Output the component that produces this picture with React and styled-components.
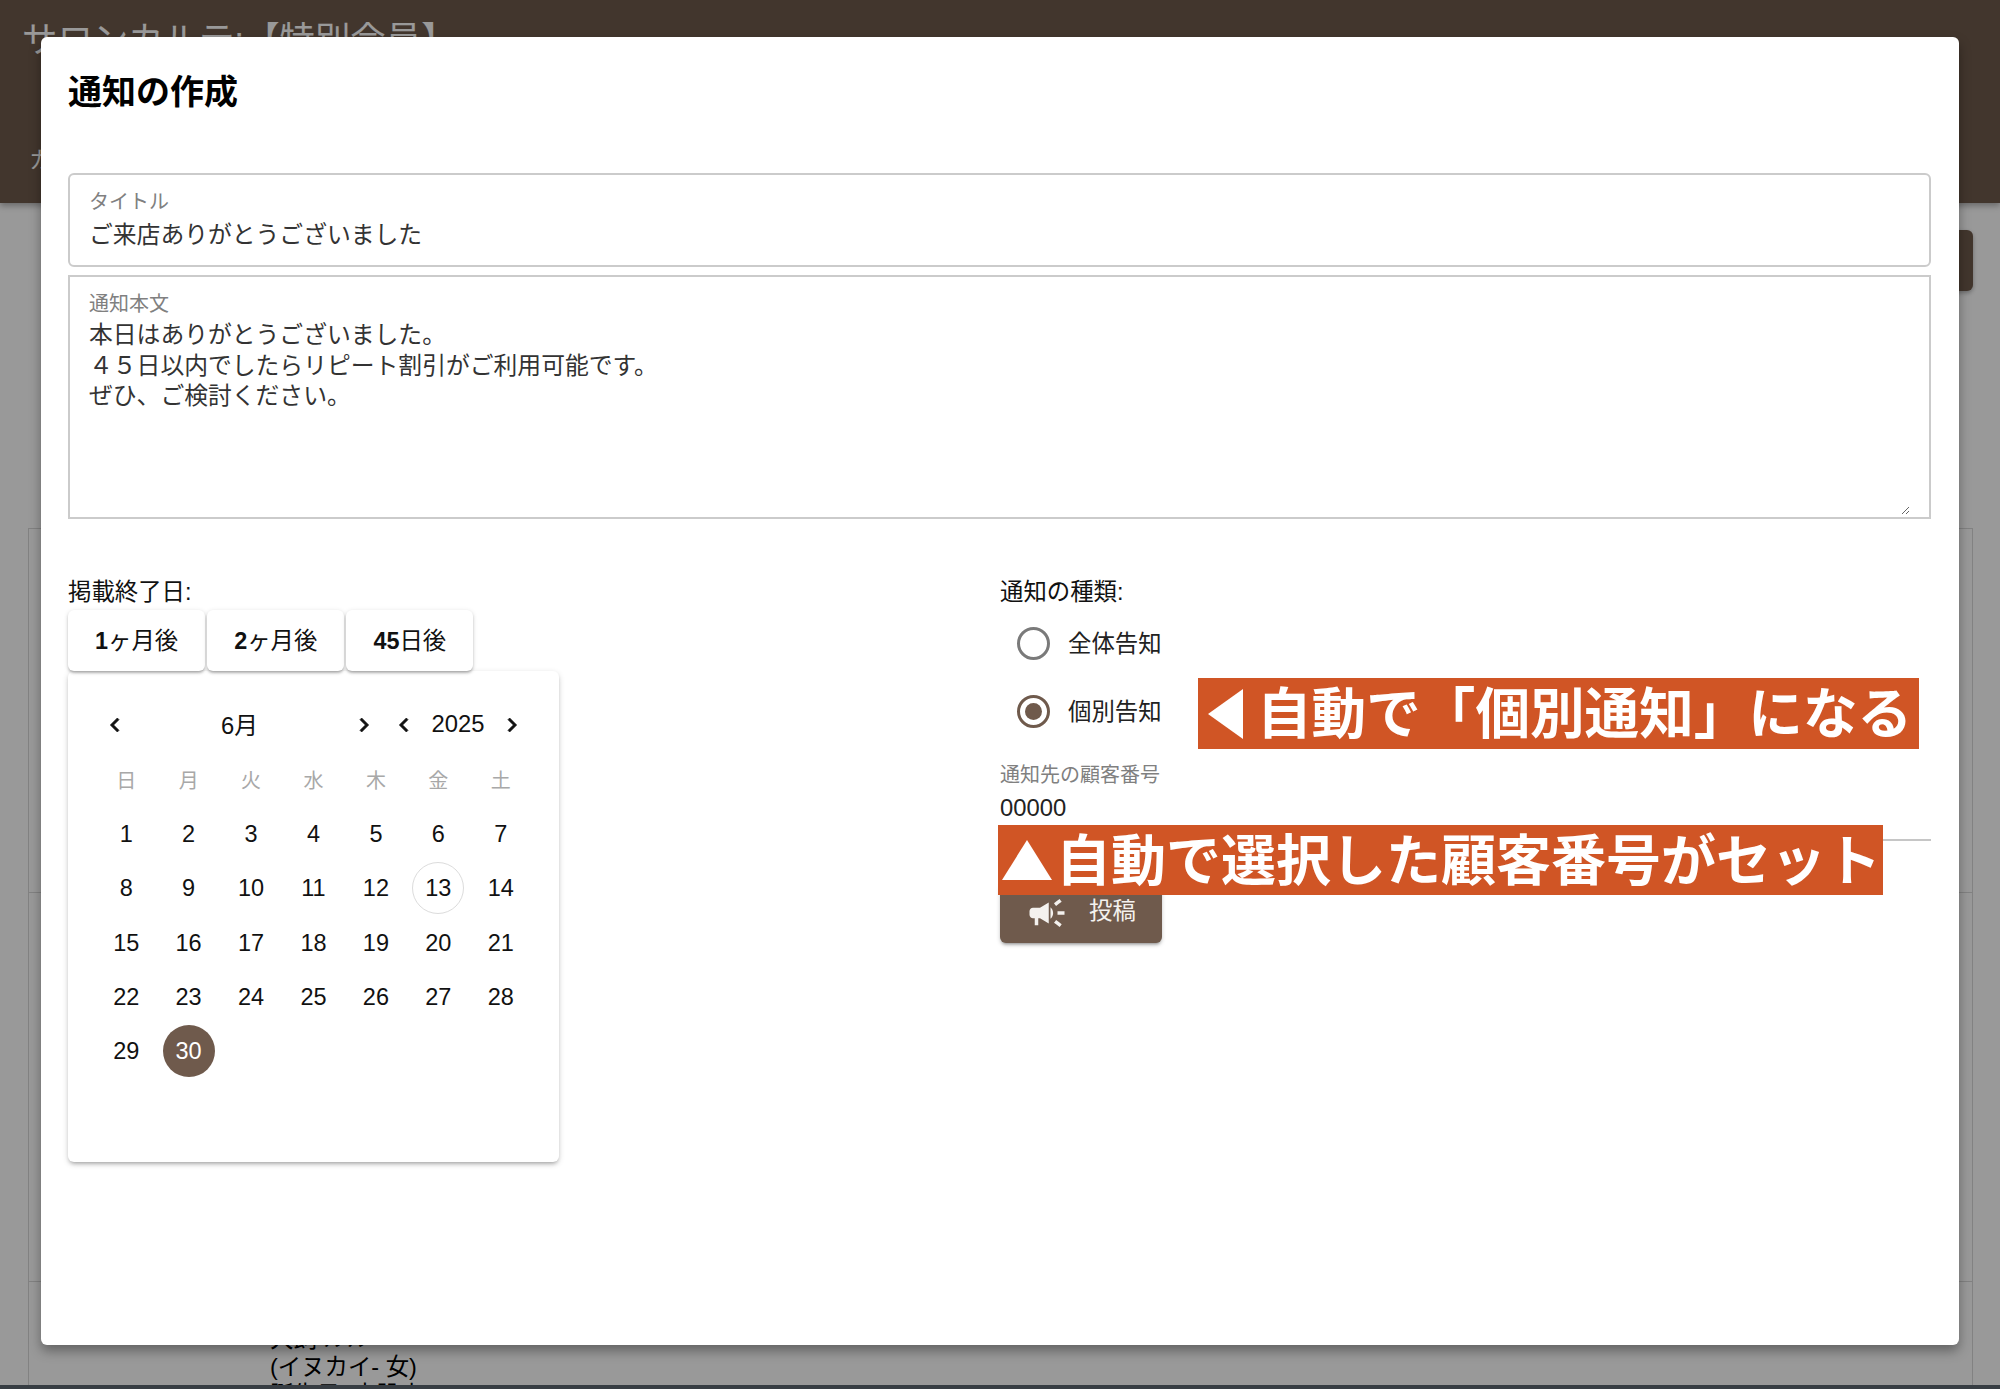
import React from 'react';
import styled, { createGlobalStyle } from 'styled-components';
import { MdCampaign, MdChevronLeft, MdChevronRight } from 'react-icons/md';

const PRIMARY = '#6f5a4c';
const FONT = '"Liberation Sans", "Noto Sans CJK JP", sans-serif';

const GlobalStyle = createGlobalStyle`
  html, body {
    margin: 0;
    padding: 0;
    background: #fff;
    font-family: ${FONT};
    color: #000;
  }
`;

const Page = styled.div`
  position: relative;
  width: 2000px;
  height: 1389px;
  overflow: hidden;
  display: flex;
  flex-direction: column;
`;

const AppBar = styled.header`
  flex: none;
  height: 203px;
  box-sizing: border-box;
  background: ${PRIMARY};
  color: #fff;
  padding: 20px 22px 0;
  box-shadow: 0 3px 6px rgba(0, 0, 0, 0.3);
`;

const AppTitle = styled.div`
  font-size: 35.4px;
  line-height: 40px;
`;

const AppTab = styled.div`
  margin-top: 84px;
  padding-left: 7px;
  font-size: 23px;
  line-height: 32px;
`;

const Content = styled.main`
  flex: 1;
  min-height: 0;
  overflow: hidden;
  padding: 27px 27px 0 28px;
`;

const ToolRow = styled.div`
  display: flex;
  justify-content: flex-end;
`;

const ToolButton = styled.div`
  width: 220px;
  height: 61px;
  border-radius: 6px;
  background: ${PRIMARY};
  box-shadow: 0 2px 4px rgba(0, 0, 0, 0.3);
`;

const Card = styled.section`
  margin-top: 237px;
  border: 1px solid #d9d9d9;
  border-bottom: 0;
`;

const Row = styled.div`
  height: ${(p) => p.$height}px;
  box-sizing: border-box;
  padding: 43px 0 0 241px;
  border-bottom: 1px solid #d9d9d9;
  font-size: 23.4px;
  line-height: 28px;
  color: #000;
`;

const BottomBar = styled.div`
  flex: none;
  height: 4px;
  background: #5c6670;
`;

const Backdrop = styled.div`
  position: absolute;
  inset: 0;
  background: rgba(0, 0, 0, 0.4);
`;

const Modal = styled.div`
  position: absolute;
  left: 41px;
  top: 37px;
  width: 1918px;
  height: 1308px;
  box-sizing: border-box;
  padding: 0 28px 0 27px;
  background: #fff;
  border-radius: 6px;
  box-shadow: 0 6px 12px rgba(0, 0, 0, 0.35);
`;

const ModalTitle = styled.h2`
  margin: 0;
  height: 136px;
  box-sizing: border-box;
  padding-top: 35px;
  font-size: 34px;
  line-height: 40px;
  font-weight: 700;
`;

const Field = styled.div`
  box-sizing: border-box;
  height: ${(p) => p.$height}px;
  margin-bottom: 8px;
  padding: 15px 19px 0;
  border: 2px solid #cbcbcb;
  border-radius: ${(p) => p.$radius || 0}px;
`;

const FieldLabel = styled.div`
  font-size: 20px;
  line-height: 24px;
  color: #808080;
`;

const FieldValue = styled.div`
  margin-top: 5px;
  font-size: 23.8px;
  line-height: 32px;
  color: #333;
`;

const BodyInput = styled.textarea`
  display: block;
  box-sizing: border-box;
  width: 100%;
  height: 195px;
  margin: 4px 0 0;
  padding: 0;
  border: 0;
  outline: 0;
  resize: vertical;
  font-family: ${FONT};
  font-size: 23.8px;
  line-height: 30.7px;
  color: #333;
`;

const Columns = styled.div`
  display: grid;
  grid-template-columns: 932px 931px;
  margin-top: 57px;
`;

const Column = styled.div`
  position: relative;
`;

const SectionLabel = styled.div`
  height: 33px;
  font-size: 23.4px;
  line-height: 32px;
  color: #111;
`;

const QuickRow = styled.div`
  display: flex;
  gap: 2px;
  margin-top: 1px;
`;

const QuickButton = styled.button`
  height: 61px;
  padding: 0 27px 4px;
  border: 0;
  border-radius: 6px;
  background: #fff;
  box-shadow: 0 3px 3px -2px rgba(0, 0, 0, 0.2), 0 2px 3px rgba(0, 0, 0, 0.16), 0 1px 5px rgba(0, 0, 0, 0.12);
  font-family: ${FONT};
  font-size: 23.4px;
  color: #111;

  b {
    font-weight: 700;
  }
`;

const Calendar = styled.div`
  width: 491px;
  height: 491px;
  box-sizing: border-box;
  padding: 26px 27px 27px;
  background: #fff;
  border-radius: 6px;
  box-shadow: 0 3px 4px -2px rgba(0, 0, 0, 0.3), 0 2px 6px rgba(0, 0, 0, 0.16);
`;

const CalNav = styled.div`
  display: flex;
  height: 55px;
`;

const NavGroup = styled.div`
  width: ${(p) => p.$width}px;
  flex: none;
  display: flex;
  align-items: center;
  justify-content: space-between;
  font-size: 23.8px;
  color: #111;

  svg {
    width: 40px;
    flex: none;
  }

  svg path:not([fill='none']) {
    stroke: currentColor;
    stroke-width: 0.6;
  }

  span {
    padding-bottom: 2px;
  }
`;

const CalGrid = styled.div`
  display: grid;
  grid-template-columns: repeat(7, 1fr);
  grid-auto-rows: 54.2px;
  justify-items: center;
  align-items: center;
`;

const WeekDay = styled.div`
  font-size: 20px;
  color: #a8a8a8;
`;

const Day = styled.div`
  width: 52px;
  height: 52px;
  box-sizing: border-box;
  display: flex;
  align-items: center;
  justify-content: center;
  padding-top: 2px;
  border-radius: 50%;
  font-size: 23.5px;
  margin-top: 1px;
  border: 1px solid ${(p) => (p.$today ? '#dcdcdc' : 'transparent')};
  background: ${(p) => (p.$selected ? PRIMARY : 'transparent')};
  color: ${(p) => (p.$selected ? '#fff' : '#111')};
`;

const RadioRow = styled.label`
  display: flex;
  align-items: center;
  height: 68px;
  padding-left: 17px;
  font-size: 23.4px;
  color: #222;
`;

const RadioMark = styled.span`
  position: relative;
  width: 33px;
  height: 33px;
  box-sizing: border-box;
  margin-right: 18px;
  border-radius: 50%;
  border: 3px solid ${(p) => (p.$checked ? PRIMARY : '#7a7a7a')};

  &::after {
    content: '';
    display: ${(p) => (p.$checked ? 'block' : 'none')};
    position: absolute;
    inset: 5px;
    border-radius: 50%;
    background: ${PRIMARY};
  }
`;

const RadioText = styled.span`
  padding-bottom: 3px;
`;

const NumberField = styled.div`
  margin-top: 18px;
  height: 76px;
  border-bottom: 2px solid #c6c6c6;
`;

const NumberValue = styled.div`
  margin-top: 6px;
  font-size: 23.8px;
  line-height: 30px;
  color: #222;
`;

const PostButton = styled.button`
  display: flex;
  align-items: center;
  width: 162px;
  height: 61px;
  margin-top: 41px;
  padding: 0 0 0 26px;
  border: 0;
  border-radius: 6px;
  background: ${PRIMARY};
  color: #f4f1ee;
  font-family: ${FONT};
  font-size: 23.4px;
  box-shadow: 0 3px 3px -2px rgba(0, 0, 0, 0.3), 0 2px 4px rgba(0, 0, 0, 0.2);

  svg {
    margin-right: 21px;
  }

  span {
    padding-bottom: 7px;
  }
`;

const Callout = styled.div`
  position: absolute;
  left: ${(p) => p.$left}px;
  top: ${(p) => p.$top}px;
  width: ${(p) => p.$width}px;
  height: ${(p) => p.$height}px;
  box-sizing: border-box;
  display: flex;
  align-items: center;
  padding-left: ${(p) => p.$pad}px;
  background: #d05525;
  color: #fff;
  font-weight: 700;
  white-space: nowrap;
  overflow: hidden;
`;

const CalloutText = styled.span`
  margin-left: ${(p) => p.$gap}px;
  padding-top: 3px;
  font-size: ${(p) => p.$size}px;
  line-height: 1;
`;

const WEEK = ['日', '月', '火', '水', '木', '金', '土'];
const DAYS = Array.from({ length: 30 }, (_, i) => i + 1);

const App = () => {
  return (
    <Page>
      <GlobalStyle />
      <AppBar>
        <AppTitle>サロンカルテ:【特別会員】</AppTitle>
        <AppTab>カルテ</AppTab>
      </AppBar>
      <Content>
        <ToolRow>
          <ToolButton />
        </ToolRow>
        <Card>
          <Row $height={364} />
          <Row $height={389} />
          <Row $height={300}>
            犬飼 ルル
            <br />
            (イヌカイ- 女)
            <br />
            誕生日: 未設定
          </Row>
        </Card>
      </Content>
      <BottomBar />
      <Backdrop />
      <Modal>
        <ModalTitle>通知の作成</ModalTitle>
        <Field $height={94} $radius={6}>
          <FieldLabel>タイトル</FieldLabel>
          <FieldValue>ご来店ありがとうございました</FieldValue>
        </Field>
        <Field $height={244}>
          <FieldLabel>通知本文</FieldLabel>
          <BodyInput
            readOnly
            defaultValue={'本日はありがとうございました。\n４５日以内でしたらリピート割引がご利用可能です。\nぜひ、ご検討ください。'}
          />
        </Field>
        <Columns>
          <Column>
            <SectionLabel>掲載終了日:</SectionLabel>
            <QuickRow>
              <QuickButton><b>1</b>ヶ月後</QuickButton>
              <QuickButton><b>2</b>ヶ月後</QuickButton>
              <QuickButton><b>45</b>日後</QuickButton>
            </QuickRow>
            <Calendar>
              <CalNav>
                <NavGroup $width={289}>
                  <MdChevronLeft size={28} />
                  <span>6月</span>
                  <MdChevronRight size={28} />
                </NavGroup>
                <NavGroup $width={148}>
                  <MdChevronLeft size={28} />
                  <span>2025</span>
                  <MdChevronRight size={28} />
                </NavGroup>
              </CalNav>
              <CalGrid>
                {WEEK.map((w) => (
                  <WeekDay key={w}>{w}</WeekDay>
                ))}
                {DAYS.map((d) => (
                  <Day key={d} $today={d === 13} $selected={d === 30}>
                    {d}
                  </Day>
                ))}
              </CalGrid>
            </Calendar>
          </Column>
          <Column>
            <SectionLabel>通知の種類:</SectionLabel>
            <RadioRow>
              <RadioMark />
              <RadioText>全体告知</RadioText>
            </RadioRow>
            <RadioRow>
              <RadioMark $checked />
              <RadioText>個別告知</RadioText>
            </RadioRow>
            <NumberField>
              <FieldLabel>通知先の顧客番号</FieldLabel>
              <NumberValue>00000</NumberValue>
            </NumberField>
            <PostButton>
              <MdCampaign size={42} />
              <span>投稿</span>
            </PostButton>
            <Callout $left={198} $top={102} $width={721} $height={71} $pad={10}>
              <svg width="35" height="50" viewBox="0 0 35 50">
                <polygon points="35,0 35,50 0,25" fill="#fff" />
              </svg>
              <CalloutText $gap={14} $size={54.6}>自動で「個別通知」になる</CalloutText>
            </Callout>
            <Callout $left={-2} $top={249} $width={885} $height={70} $pad={4}>
              <svg width="50" height="40" viewBox="0 0 50 40">
                <polygon points="25,0 50,40 0,40" fill="#fff" />
              </svg>
              <CalloutText $gap={4} $size={55}>自動で選択した顧客番号がセット</CalloutText>
            </Callout>
          </Column>
        </Columns>
      </Modal>
    </Page>
  );
};

export default App;
